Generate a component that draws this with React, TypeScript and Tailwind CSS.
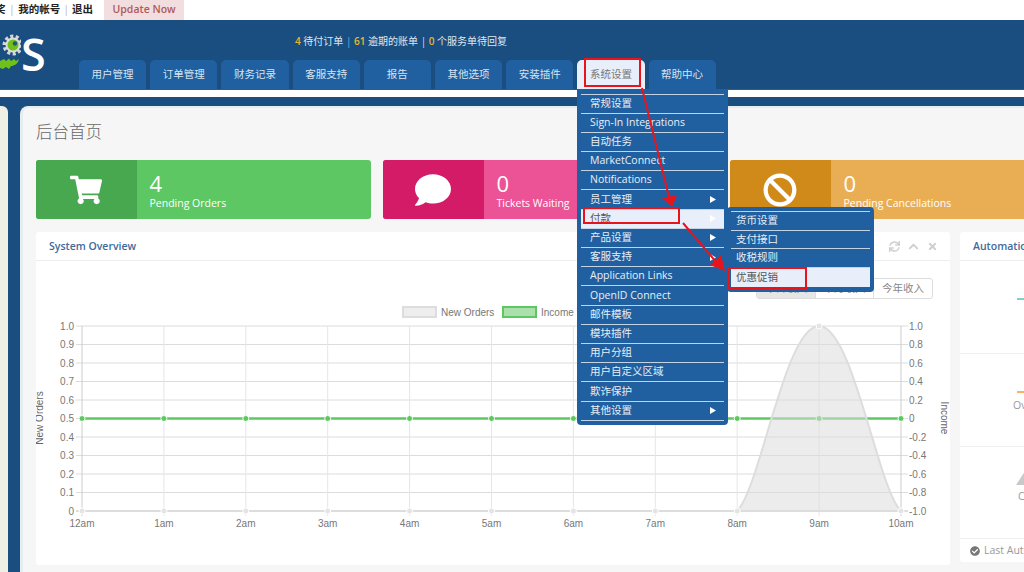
import { FaBan, FaCheckCircle, FaChevronUp, FaComment, FaShoppingCart, FaSync, FaTimes } from "react-icons/fa"

const tabs = ["用户管理", "订单管理", "财务记录", "客服支持", "报告", "其他选项", "安装插件", "系统设置", "帮助中心"]

const menuItems = [
  { label: "常规设置" },
  { label: "Sign-In Integrations" },
  { label: "自动任务" },
  { label: "MarketConnect" },
  { label: "Notifications" },
  { label: "员工管理", more: true },
  { label: "付款", more: true, active: true },
  { label: "产品设置", more: true },
  { label: "客服支持", more: true },
  { label: "Application Links" },
  { label: "OpenID Connect" },
  { label: "邮件模板" },
  { label: "模块插件" },
  { label: "用户分组" },
  { label: "用户自定义区域" },
  { label: "欺诈保护" },
  { label: "其他设置", more: true },
]

const subItems = ["货币设置", "支付接口", "收税规则", "优惠促销"]

const hours = ["12am", "1am", "2am", "3am", "4am", "5am", "6am", "7am", "8am", "9am", "10am"]
const leftTicks = ["1.0", "0.9", "0.8", "0.7", "0.6", "0.5", "0.4", "0.3", "0.2", "0.1", "0"]
const rightTicks = ["1.0", "0.8", "0.6", "0.4", "0.2", "0", "-0.2", "-0.4", "-0.6", "-0.8", "-1.0"]

const hourX = (i: number) => 82 + i * 81.9
const tickY = (i: number) => 326 + i * 18.5

function Logo() {
  return (
    <div className="w-[79px] shrink-0 flex items-center h-[69px] -mt-px">
      <svg width="21" height="40" viewBox="0 0 21 40" className="shrink-0">
        <circle cx="13" cy="11" r="8.5" fill="none" stroke="#d4d4d4" strokeWidth="4" strokeDasharray="3 2.3" />
        <circle cx="13" cy="11" r="7.5" fill="#dcdcdc" />
        <circle cx="13" cy="11" r="5.5" fill="#6fc01a" />
        <circle cx="15" cy="9.5" r="2.2" fill="#1f5a70" />
        <path d="M0 27 L4 25 L6 27 L9 24.5 L11 27 L14 25 L16 27 L19 25 C18 30 14 32 11 32 L9 35 L6 33 L3 35 L0 34 Z" fill="#6fc01a" />
      </svg>
      <span className="text-[45px] leading-none font-semibold text-white -mt-[1px]">S</span>
    </div>
  )
}

function StatCard({ dark, light, icon, value, label }: { dark: string; light: string; icon: React.ReactNode; value: string; label: string }) {
  return (
    <div className={`flex w-[335px] h-[59px] shrink-0 rounded-[3px] overflow-hidden text-white ${light}`}>
      <div className={`w-[100.5px] shrink-0 flex items-center justify-center ${dark}`}>{icon}</div>
      <div className="pl-[13px] pt-[11px]">
        <div className="text-[22px] leading-[25px]">{value}</div>
        <div className="text-[10.5px] leading-[14px]">{label}</div>
      </div>
    </div>
  )
}

function Chart() {
  return (
    <svg width="914" height="266" viewBox="36 299 914 266" className="block [font-family:'Liberation_Sans',sans-serif]">
      <rect x="403" y="307" width="33" height="10" fill="#eeeeee" stroke="#dddddd" strokeWidth="2" />
      <text x="441" y="316" fontSize="10" fill="#777">New Orders</text>
      <rect x="503" y="307" width="33" height="10" fill="#abdfac" stroke="#5cc85f" strokeWidth="2" />
      <text x="541" y="316" fontSize="10" fill="#777">Income</text>

      {leftTicks.map((t, i) => (
        <g key={t}>
          <line x1="76" x2="908" y1={tickY(i)} y2={tickY(i)} stroke={i === 10 ? "#dddddd" : "#dcdcdc"} strokeWidth={i === 10 ? 2 : 1} />
          <text x="74" y={tickY(i) + 3.5} fontSize="10" fill="#777" textAnchor="end">{t}</text>
          <text x="909" y={tickY(i) + 3.5} fontSize="10" fill="#777">{rightTicks[i]}</text>
        </g>
      ))}
      {hours.map((h, i) => (
        <g key={h}>
          <line x1={hourX(i)} x2={hourX(i)} y1="326" y2="516" stroke={i === 0 || i === 10 ? "#cccccc" : "#e6e6e6"} />
          <text x={hourX(i)} y="527" fontSize="10" fill="#777" textAnchor="middle">{h}</text>
        </g>
      ))}

      <line x1="82" x2="901" y1="418.5" y2="418.5" stroke="#5cc85f" strokeWidth="2.5" />
      {hours.map((h, i) => (
        <circle key={h} cx={hourX(i)} cy="418.5" r="3" fill="#5cc85f" stroke="#ffffff" strokeWidth="1" />
      ))}
      <path
        d="M737 511 C760 490 785 326 819 326 C853 326 878 490 901 511 Z"
        fill="#dcdcdc"
        fillOpacity="0.55"
        stroke="#dddddd"
        strokeWidth="2"
      />
      {hours.map((h, i) => (
        <circle key={h} cx={hourX(i)} cy={i === 9 ? 326 : 511} r="3" fill="#e4e4e4" stroke="#ffffff" strokeWidth="1" />
      ))}

      <text transform="translate(43 418) rotate(-90)" fontSize="10" fill="#666" textAnchor="middle">New Orders</text>
      <text transform="translate(941 418) rotate(90)" fontSize="10" fill="#666" textAnchor="middle">Income</text>
    </svg>
  )
}

function Annotations() {
  return (
    <>
      <div className="absolute left-[584px] top-[58px] w-[57px] h-[29px] border-2 border-[#e8141c]" />
      <div className="absolute left-[583px] top-[207px] w-[97px] h-[17px] border-2 border-[#e8141c]" />
      <div className="absolute left-[728px] top-[267px] w-[79px] h-[23px] border-2 border-[#e8141c]" />
      <svg width="1024" height="572" className="absolute left-0 top-0 pointer-events-none">
        <line x1="642" y1="88" x2="669" y2="197" stroke="#e8141c" strokeWidth="2" />
        <polygon points="672,207 662,198 677,195" fill="#e8141c" />
        <line x1="683" y1="223" x2="717" y2="263" stroke="#e8141c" strokeWidth="2" />
        <polygon points="725,271 710,265 721,255" fill="#e8141c" />
      </svg>
    </>
  )
}

function Menu() {
  return (
    <div className="absolute left-[577px] top-[90px] w-[151px] h-[335px] pt-[3.5px] bg-[#2060a0] rounded-b-[4px] text-[10.5px] text-[#e8eff6]">
      {menuItems.map((item) => (
        <div
          key={item.label}
          className={`mx-[4px] h-[19.2px] border-t border-[#c3d3e3] pl-[9px] pr-[8px] flex items-center justify-between ${item.active ? "bg-[#e8eefa] text-[#555]" : ""}`}
        >
          <span>{item.label}</span>
          {item.more && (
            <svg width="6" height="7" viewBox="0 0 6 7">
              <polygon points="0,0 6,3.5 0,7" fill="#ffffff" />
            </svg>
          )}
        </div>
      ))}
      <div className="mx-[4px] border-t border-[#c3d3e3]" />
      <div className="absolute left-[150px] top-[117px] w-[147px] h-[85px] pt-[4px] bg-[#2060a0] rounded-[4px]">
        {subItems.map((s, i) => (
          <div
            key={s}
            className={`mx-[4px] border-t border-[#c3d3e3] pl-[5px] flex items-center ${i === 3 ? "h-[20px] bg-[#e8eefa] text-[#555]" : "h-[18.7px]"}`}
          >
            {s}
          </div>
        ))}
      </div>
    </div>
  )
}

export default function App() {
  return (
    <div className="relative w-[1024px] h-[572px] overflow-hidden flex flex-col bg-[#1a4d80] [font-family:'Open_Sans','Noto_Sans_CJK_SC',sans-serif]">
      {/* top links */}
      <div className="h-[20px] shrink-0 bg-white flex items-center text-[10.5px] font-semibold text-[#222]">
        <span className="-ml-[5px]">奖</span>
        <span className="mx-[3.5px] font-normal text-[#bbb]">|</span>
        <span>我的帐号</span>
        <span className="mx-[3px] font-normal text-[#bbb]">|</span>
        <span>退出</span>
        <span className="ml-[11px] w-[80px] h-full flex items-center justify-center bg-[#f2dede] text-[#b0595a] font-semibold">Update Now</span>
      </div>

      {/* header */}
      <div className="h-[70px] shrink-0 flex border-b border-[#2060a0]">
        <Logo />
        <div className="flex-1 flex flex-col justify-end">
          <div className="h-[29px] ml-[216px] mb-[9px] flex items-end text-[10px] leading-[20px] text-[#dfe8f1]">
            <span><b className="font-semibold text-[#e8b534]">4</b> 待付订单 <span className="text-[#6fb0e0]">|</span> <b className="font-semibold text-[#e8b534]">61</b> 逾期的账单 <span className="text-[#ddd]">|</span> <b className="font-semibold text-[#e8b534]">0</b> 个服务单待回复</span>
          </div>
          <div className="flex gap-[4px] h-[29px]">
            {tabs.map((t) => (
              <div
                key={t}
                className={`w-[67.2px] pt-[1px] rounded-t-[5px] flex items-center justify-center text-[10.5px] ${t === "系统设置" ? "bg-[#e8eefa] text-[#777]" : "bg-[#2060a0] text-[#d8e4f0]"}`}
              >
                {t}
              </div>
            ))}
          </div>
        </div>
      </div>
      <div className="h-[7px] shrink-0 bg-white" />

      {/* page */}
      <div className="flex-1 flex pt-[9px] min-h-0">
        <div className="w-[8px] shrink-0 bg-[#f0efe6] rounded-tr-[6px]" />
        <div className="ml-[12px] w-[1100px] shrink-0 bg-[#f6f6f6] rounded-tl-[8px] border-l-[3px] border-t-[2px] border-[#e6edf0] pl-[13px]">
          <h1 className="pt-[12px] h-[38px] text-[16.5px] leading-[24px] font-light text-[#666]">后台首页</h1>
          <div className="mt-[14px] flex gap-[12px]">
            <StatCard dark="bg-[#48a84f]" light="bg-[#5cc763]" icon={<FaShoppingCart className="text-[32px]" />} value="4" label="Pending Orders" />
            <StatCard dark="bg-[#d41b68]" light="bg-[#ec5296]" icon={<FaComment className="text-[36px]" />} value="0" label="Tickets Waiting" />
            <StatCard dark="bg-[#d08a1a]" light="bg-[#e9ae54]" icon={<FaBan className="text-[34px]" />} value="0" label="Pending Cancellations" />
          </div>

          <div className="mt-[13px] flex gap-[10px] items-start">
            <div className="w-[914px] h-[333px] shrink-0 bg-white rounded-[3px]">
              <div className="h-[29px] pt-[1px] border-b border-[#eeeeee] pl-[13px] pr-[12px] flex items-center justify-between">
                <span className="text-[10.5px] font-semibold text-[#3f6a9a]">System Overview</span>
                <div className="flex items-center gap-[8px] text-[#cfcfcf] text-[11px]">
                  <FaSync />
                  <FaChevronUp />
                  <FaTimes />
                </div>
              </div>
              <div className="pt-[17px] h-[38px] pr-[17px] flex justify-end">
                <div className="flex h-[21px] border border-[#dddddd] rounded-[3px] text-[10.5px] text-[#888]">
                  <div className="w-[59px] bg-[#e6e6e6] border-r border-[#dddddd] flex items-center justify-center">今日收入</div>
                  <div className="w-[58px] border-r border-[#dddddd] flex items-center justify-center">本月收入</div>
                  <div className="w-[58px] flex items-center justify-center">今年收入</div>
                </div>
              </div>
              <Chart />
            </div>

            <div className="w-[200px] h-[330px] shrink-0 bg-white rounded-[3px] flex flex-col text-[10.5px]">
              <div className="h-[29px] pt-[1px] shrink-0 border-b border-[#eeeeee] pl-[13px] flex items-center font-semibold text-[#3f6a9a]">Automation Overview</div>
              <div className="h-[93px] shrink-0 border-b border-[#eeeeee] pl-[57px] pt-[37px]">
                <div className="h-[2px] w-[60px] bg-[#7fd0c8]" />
              </div>
              <div className="h-[93px] shrink-0 border-b border-[#eeeeee] pl-[53px] pt-[37px] text-[#999]">
                <div className="ml-[4px] h-[2px] w-[60px] bg-[#f4b26a]" />
                <div className="mt-[5px]">Overdue</div>
              </div>
              <div className="h-[92px] shrink-0 border-b border-[#eeeeee] pl-[58px] pt-[21px] text-[#999]">
                <svg width="20" height="17" viewBox="0 0 20 17" className="-ml-[2px] block">
                  <polygon points="0,17 11,0 20,0 20,17" fill="#c9c9c9" />
                </svg>
                <div className="mt-[4px]">Cancellations</div>
              </div>
              <div className="flex-1 pl-[10px] flex items-center gap-[4px] text-[#999] whitespace-nowrap">
                <FaCheckCircle className="text-[#777] text-[10px]" />
                <span>Last Automation Run</span>
              </div>
            </div>
          </div>
        </div>
      </div>

      <Menu />
      <Annotations />
    </div>
  )
}
